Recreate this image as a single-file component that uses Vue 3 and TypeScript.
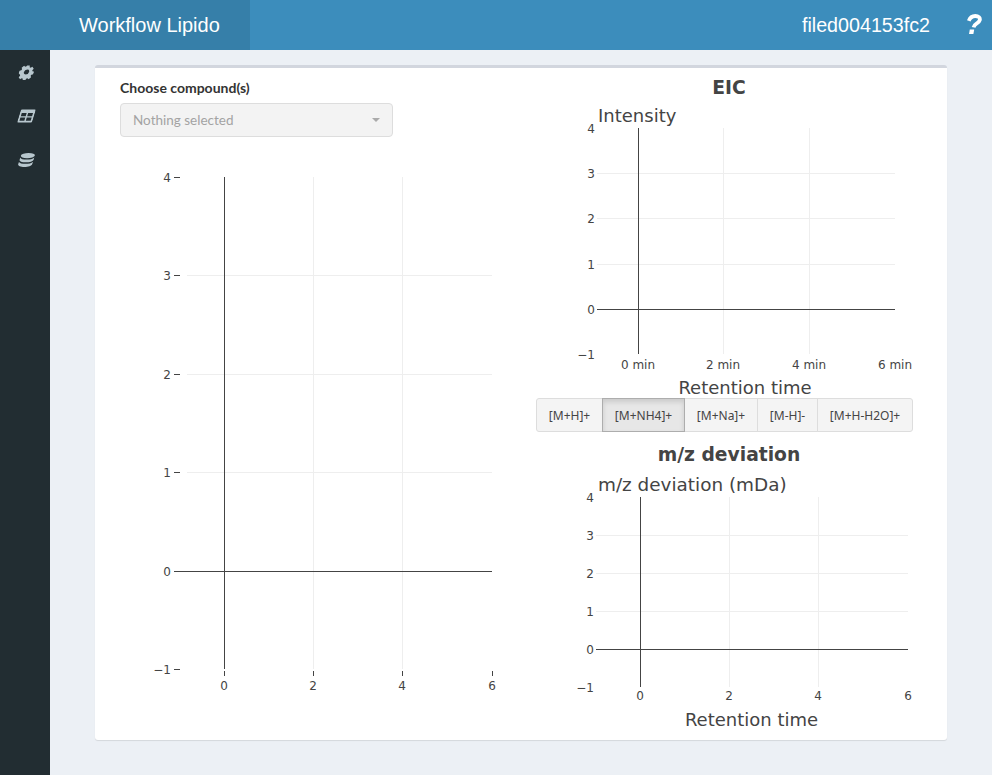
<template>
  <div class="page">
    <header class="topbar">
      <div class="logo">Workflow Lipido</div>
      <div class="topbar-right">
        <span class="filename">filed004153fc2</span>
        <svg class="help" viewBox="0 0 17 20">
          <path class="help-curve" d="M3.800 6.800C5 3.400 7.500 2 10.300 2 13.500 2 15.300 3.800 14.800 6c-.4 1.800-1.800 2.800-3.600 3.800-1.600.9-2.300 1.900-2.600 3.500" />
          <path d="M4.800 15.600h4.400l-.8 4.400H4z" />
        </svg>
      </div>
    </header>
    <div class="main">
      <aside class="sidebar">
        <svg class="side-icon" viewBox="0 0 16 16">
          <path fill-rule="evenodd" d="M6.600 1h2.800l.4 1.900 1.200.5 1.600-1 2 2-1 1.600.5 1.200 1.900.4v2.800l-1.900.4-.5 1.200 1 1.600-2 2-1.600-1-1.200.5-.4 1.900H6.600l-.4-1.900-1.200-.5-1.600 1-2-2 1-1.600-.5-1.200L0 9.400V6.600l1.900-.4.5-1.200-1-1.600 2-2 1.600 1 1.200-.5zM8 5.300a2.700 2.700 0 1 0 0 5.400 2.700 2.700 0 0 0 0-5.400z" />
        </svg>
        <svg class="side-icon" viewBox="0 0 16 14">
          <path fill-rule="evenodd" d="M1.500 0h13A1.500 1.500 0 0 1 16 1.500v11a1.500 1.500 0 0 1-1.500 1.500h-13A1.500 1.500 0 0 1 0 12.500v-11A1.500 1.500 0 0 1 1.500 0zM2 3.800v3.400h5.200V3.800zm6.800 0v3.400H14V3.800zM2 8.600v3.400h5.200V8.600zm6.800 0v3.400H14V8.600z" />
        </svg>
        <svg class="side-icon" viewBox="0 0 16 15">
          <ellipse cx="8" cy="2.800" rx="7.500" ry="2.800" />
          <path d="M.5 4.800C1.500 6.500 4.500 7 8 7s6.500-.5 7.500-2.200v2.400C15.500 8.800 12 10 8 10S.5 8.800.5 7.200z" />
          <path d="M.5 9.300C1.500 11 4.500 11.600 8 11.600s6.500-.6 7.500-2.300v2.700C15.500 13.700 12 15 8 15s-7.500-1.300-7.500-3z" />
        </svg>
      </aside>
      <main class="content">
        <section class="box">
          <div class="col">
            <label class="field-label">Choose compound(s)</label>
            <div class="picker">
              <span>Nothing selected</span>
              <i class="caret" />
            </div>
            <svg class="plot plot-main" width="386" height="560">
              <line v-for="(l, i) in lines(mainPlot)" :key="i" :class="l.cls" :x1="l.x1" :y1="l.y1" :x2="l.x2" :y2="l.y2" />
              <text v-for="t in labels(mainPlot)" :key="t.key" :x="t.x" :y="t.y" :text-anchor="t.anchor">{{ t.text }}</text>
            </svg>
          </div>
          <div class="col">
            <h3 class="plot-title">EIC</h3>
            <svg class="plot plot-eic" width="386" height="300">
              <text class="axis-title" x="62" y="24">Intensity</text>
              <text class="axis-title" x="209" y="296" text-anchor="middle">Retention time</text>
              <line v-for="(l, i) in lines(eicPlot)" :key="i" :class="l.cls" :x1="l.x1" :y1="l.y1" :x2="l.x2" :y2="l.y2" />
              <text v-for="t in labels(eicPlot)" :key="t.key" :x="t.x" :y="t.y" :text-anchor="t.anchor">{{ t.text }}</text>
            </svg>
            <div class="adducts">
              <button v-for="a in adducts" :key="a" class="adduct" :class="{ active: a === selected }">{{ a }}</button>
            </div>
            <h3 class="plot-title plot-title--second">m/z deviation</h3>
            <svg class="plot plot-mz" width="386" height="270">
              <text class="axis-title axis-title--wide" x="62" y="27">m/z deviation (mDa)</text>
              <text class="axis-title" x="215.500" y="262" text-anchor="middle">Retention time</text>
              <line v-for="(l, i) in lines(mzPlot)" :key="i" :class="l.cls" :x1="l.x1" :y1="l.y1" :x2="l.x2" :y2="l.y2" />
              <text v-for="t in labels(mzPlot)" :key="t.key" :x="t.x" :y="t.y" :text-anchor="t.anchor">{{ t.text }}</text>
            </svg>
          </div>
        </section>
      </main>
    </div>
  </div>
</template>

<script setup lang="ts">
interface Plot {
  xs: number[]      // pixel of x = 0, 2, 4, 6
  ys: number[]      // pixel of y = 4 ... -1
  left: number      // where the horizontal lines start
  right: number
  unit?: string
  ticks?: boolean
  xLabelY: number
  yLabelX: number
  gridLeft?: number
}

const adducts = ['[M+H]+', '[M+NH4]+', '[M+Na]+', '[M-H]-', '[M+H-H2O]+']
const selected = '[M+NH4]+'

const mainPlot: Plot = {
  xs: [104, 193, 282, 372],
  ys: [27, 125, 224, 322, 421, 519],
  left: 54,
  right: 372,
  gridLeft: 67,
  ticks: true,
  xLabelY: 540,
  yLabelX: 51,
}
const eicPlot: Plot = {
  xs: [102, 187, 273, 359],
  ys: [30, 75, 120, 166, 211, 256],
  left: 61,
  right: 359,
  unit: ' min',
  xLabelY: 271,
  yLabelX: 59,
}
const mzPlot: Plot = {
  xs: [104, 193, 282, 372],
  ys: [33, 71, 109, 147, 185, 223],
  left: 60,
  right: 372,
  xLabelY: 236,
  yLabelX: 58,
}

function lines(p: Plot) {
  const out: { cls: string; x1: number; y1: number; x2: number; y2: number }[] = []
  const top = p.ys[0]
  const bottom = p.ys[5]
  // no grid line on the outer edges, plotly leaves those out
  p.xs.slice(1, 3).forEach((x) => out.push({ cls: 'grid', x1: x + 0.5, y1: top, x2: x + 0.5, y2: bottom }))
  p.ys.slice(1, 4).forEach((y) => {
    out.push({ cls: 'grid', x1: p.gridLeft ?? p.left, y1: y + 0.5, x2: p.right, y2: y + 0.5 })
  })
  if (p.ticks) {
    p.ys.forEach((y) => out.push({ cls: 'axis', x1: p.left, y1: y + 0.5, x2: p.left + 6, y2: y + 0.5 }))
    p.xs.forEach((x) => out.push({ cls: 'axis', x1: x + 0.5, y1: bottom + 2, x2: x + 0.5, y2: bottom + 7 }))
  }
  out.push({ cls: 'axis', x1: p.xs[0] + 0.5, y1: top, x2: p.xs[0] + 0.5, y2: bottom })
  out.push({ cls: 'axis', x1: p.left, y1: p.ys[4] + 0.5, x2: p.right, y2: p.ys[4] + 0.5 })
  return out
}

function labels(p: Plot) {
  const yVals = ['4', '3', '2', '1', '0', '\u22121']
  const xVals = ['0', '2', '4', '6']
  const out = yVals.map((text, i) => ({
    key: 'y' + i, text, x: p.yLabelX, y: p.ys[i] + 5, anchor: 'end',
  }))
  xVals.forEach((v, i) => {
    out.push({ key: 'x' + i, text: v + (p.unit ?? ''), x: p.xs[i], y: p.xLabelY, anchor: 'middle' })
  })
  return out
}
</script>

<style>
html, body { margin: 0; padding: 0; }
</style>

<style scoped>
.page {
  width: 992px;
  height: 775px;
  overflow: hidden;
  background: #ecf0f5;
  display: flex;
  flex-direction: column;
  font-family: "Noto Sans", "Open Sans", sans-serif;
}
.topbar {
  height: 50px;
  flex-shrink: 0;
  display: flex;
  background: #3c8dbc;
  color: #fff;
  font-family: "Liberation Sans", Arial, sans-serif;
}
.logo {
  width: 250px;
  box-sizing: border-box;
  padding-left: 79px;
  background: #367fa9;
  font-size: 20px;
  line-height: 50px;
}
.topbar-right {
  flex: 1;
  display: flex;
  justify-content: flex-end;
  align-items: center;
  padding-right: 10px;
}
.filename { font-size: 19.7px; }
.help {
  margin-left: 35px;
  width: 17px;
  height: 20px;
  margin-top: -2px;
  fill: #fff;
}
.help-curve {
  fill: none;
  stroke: #fff;
  stroke-width: 3.8;
}
.main { flex: 1; display: flex; min-height: 0; }
.sidebar {
  width: 50px;
  flex-shrink: 0;
  background: #222d32;
  display: flex;
  flex-direction: column;
  align-items: center;
  padding-top: 14px;
  gap: 28px;
}
.side-icon {
  width: 15px;
  height: 16px;
  fill: #b8c7ce;
  transform: skewX(-17deg);
  margin-left: 3px;
}
.content { flex: 1; padding: 15px 45px 0; }
.box {
  box-sizing: border-box;
  height: 675px;
  background: #fff;
  border-top: 3px solid #d2d6de;
  border-radius: 3px;
  box-shadow: 0 1px 1px rgba(0, 0, 0, 0.1);
  padding: 0 25px;
  display: grid;
  grid-template-columns: 386px 386px;
  column-gap: 30px;
}
.col { display: flex; flex-direction: column; min-width: 0; }
.field-label {
  font-family: Lato, "Noto Sans", sans-serif;
  font-size: 14px;
  font-weight: 700;
  color: #333;
  line-height: 18px;
  margin-top: 11px;
}
.picker {
  box-sizing: border-box;
  width: 273px;
  height: 34px;
  margin-top: 6px;
  padding: 0 12px 1px;
  background: #f3f3f3;
  border: 1px solid #ddd;
  border-radius: 4px;
  display: flex;
  align-items: center;
  justify-content: space-between;
  font-family: Lato, "Noto Sans", sans-serif;
  font-size: 13.5px;
  color: #a3a3a3;
}
.caret {
  border-top: 4px solid #aaa;
  border-left: 4px solid transparent;
  border-right: 4px solid transparent;
}
.plot { display: block; overflow: visible; }
.plot-main { margin-top: 13px; }
.plot-mz { margin-top: -1px; }
.plot text {
  font-family: "DejaVu Sans", Verdana, sans-serif;
  font-size: 12px;
  fill: #444;
}
.plot .axis-title { font-size: 18px; }
.plot .axis-title--wide { font-size: 18.4px; }
.grid { stroke: #eee; stroke-width: 1; }
.axis { stroke: #444; stroke-width: 1; }
.plot-title {
  margin: 0;
  font: 700 18.72px/20px "DejaVu Sans", Verdana, sans-serif;
  color: #444;
  text-align: center;
  padding-top: 10px;
}
.plot-title--second { padding-top: 13px; }
.adducts {
  display: flex;
  width: 377px;
  height: 34px;
  flex-shrink: 0;
}
.adduct {
  box-sizing: border-box;
  height: 34px;
  padding: 0;
  margin-left: -1px;
  background: #f4f4f4;
  border: 1px solid #ddd;
  color: #444;
  font-family: inherit;
  font-size: 12px;
  white-space: nowrap;
  flex: 1 1 auto;
}
.adduct:first-child { margin-left: 0; border-radius: 3px 0 0 3px; }
.adduct:last-child { border-radius: 0 3px 3px 0; }
.adduct.active {
  background: #e7e7e7;
  border-color: #adadad;
  box-shadow: inset 0 3px 5px rgba(0, 0, 0, 0.125);
  position: relative;
}
</style>
